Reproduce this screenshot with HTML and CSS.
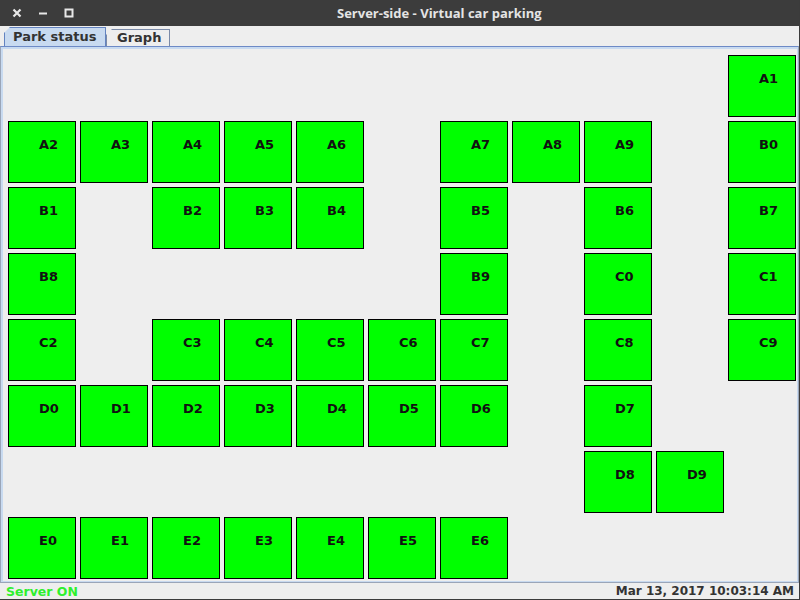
FILE: index.html
```html
<!DOCTYPE html>
<html>
<head>
<meta charset="utf-8">
<link rel="stylesheet" href="styles.css">
</head>
<body>
<div class="window">
  <div class="titlebar">
    <div class="controls">
      <svg class="ctl" width="10" height="10" viewBox="0 0 10 10"><path d="M1.5 1.5 L8.5 8.5 M8.5 1.5 L1.5 8.5" stroke="#e8e8e8" stroke-width="2.2" stroke-linecap="butt"/></svg>
      <svg class="ctl" width="10" height="10" viewBox="0 0 10 10"><path d="M1 5.5 H9" stroke="#e8e8e8" stroke-width="2"/></svg>
      <svg class="ctl" width="10" height="10" viewBox="0 0 10 10"><rect x="1.5" y="1.5" width="7" height="7" fill="none" stroke="#e8e8e8" stroke-width="2"/></svg>
    </div>
    <div class="title">Server-side - Virtual car parking</div>
  </div>
  <div class="tabs">
    <div class="tab selected">Park status</div>
    <div class="tab">Graph</div>
  </div>
  <div class="panel">
    <div class="grid">
      <div class="e"></div><div class="e"></div><div class="e"></div><div class="e"></div><div class="e"></div><div class="e"></div><div class="e"></div><div class="e"></div><div class="e"></div><div class="e"></div><div class="c">A1</div>
      <div class="c">A2</div><div class="c">A3</div><div class="c">A4</div><div class="c">A5</div><div class="c">A6</div><div class="e"></div><div class="c">A7</div><div class="c">A8</div><div class="c">A9</div><div class="e"></div><div class="c">B0</div>
      <div class="c">B1</div><div class="e"></div><div class="c">B2</div><div class="c">B3</div><div class="c">B4</div><div class="e"></div><div class="c">B5</div><div class="e"></div><div class="c">B6</div><div class="e"></div><div class="c">B7</div>
      <div class="c">B8</div><div class="e"></div><div class="e"></div><div class="e"></div><div class="e"></div><div class="e"></div><div class="c">B9</div><div class="e"></div><div class="c">C0</div><div class="e"></div><div class="c">C1</div>
      <div class="c">C2</div><div class="e"></div><div class="c">C3</div><div class="c">C4</div><div class="c">C5</div><div class="c">C6</div><div class="c">C7</div><div class="e"></div><div class="c">C8</div><div class="e"></div><div class="c">C9</div>
      <div class="c">D0</div><div class="c">D1</div><div class="c">D2</div><div class="c">D3</div><div class="c">D4</div><div class="c">D5</div><div class="c">D6</div><div class="e"></div><div class="c">D7</div><div class="e"></div><div class="e"></div>
      <div class="e"></div><div class="e"></div><div class="e"></div><div class="e"></div><div class="e"></div><div class="e"></div><div class="e"></div><div class="e"></div><div class="c">D8</div><div class="c">D9</div><div class="e"></div>
      <div class="c">E0</div><div class="c">E1</div><div class="c">E2</div><div class="c">E3</div><div class="c">E4</div><div class="c">E5</div><div class="c">E6</div><div class="e"></div><div class="e"></div><div class="e"></div><div class="e"></div>
    </div>
  </div>
  <div class="status">
    <span class="on">Server ON</span>
    <span class="date">Mar 13, 2017 10:03:14 AM</span>
  </div>
</div>
</body>
</html>
```

FILE: styles.css
```css
html, body {
  margin: 0;
  padding: 0;
}
body {
  width: 800px;
  height: 600px;
  overflow: hidden;
  background: #eeeeee;
  font-family: "DejaVu Sans", sans-serif;
}
.window {
  width: 800px;
  height: 600px;
  display: flex;
  flex-direction: column;
  box-sizing: border-box;
  border-bottom: 1px solid #3b3b3b;
  border-right: 1px solid #3b3b3b;
}
.titlebar {
  height: 26px;
  flex: none;
  background: #3c3c3c;
  display: flex;
  align-items: center;
  position: relative;
}
.controls {
  display: flex;
  align-items: center;
  gap: 16px;
  padding-left: 12px;
}
.ctl {
  display: block;
}
.title {
  position: absolute;
  left: 337px;
  top: 0;
  line-height: 26px;
  color: #e4e4e4;
  font-weight: bold;
  font-size: 13px;
  font-family: "Open Sans", "DejaVu Sans", sans-serif;
}
.tabs {
  height: 20px;
  flex: none;
  display: flex;
  align-items: flex-end;
  padding-left: 4px;
}
.tab {
  box-sizing: border-box;
  height: 17px;
  border: 1px solid #7a8aa8;
  border-bottom: none;
  font-size: 13px;
  font-weight: bold;
  color: #333333;
  line-height: 16px;
  white-space: nowrap;
  background: #eeeeee;
  clip-path: polygon(6px 0, 100% 0, 100% 100%, 0 100%, 0 6px);
}
.tab.selected {
  height: 19px;
  width: 102px;
  background: #c8daf0;
  border-color: #6383c0;
  line-height: 18px;
  padding-left: 8px;
}
.tab:not(.selected) {
  width: 64px;
  padding-left: 10px;
}
.panel {
  flex: none;
  height: 537px;
  box-sizing: border-box;
  border-top: 1px solid #6d8ac6;
  border-left: 1px solid #9aa5b8;
  border-right: 1px solid #9aa5b8;
  border-bottom: 1px solid #9aa5b8;
  box-shadow: inset 2px 2px 0 #c8daf0, inset -1px -1px 0 #c8daf0;
  padding: 8px 0 0 7px;
}
.grid {
  display: grid;
  grid-template-columns: repeat(11, 68px);
  grid-auto-rows: 62px;
  gap: 4px;
}
.c {
  box-sizing: border-box;
  background: #00ff00;
  border: 1px solid #000000;
  padding: 15px 0 0 30px;
  font-size: 13px;
  font-weight: bold;
  line-height: 15px;
  color: #111111;
}
.status {
  flex: 1;
  display: flex;
  justify-content: space-between;
  align-items: center;
  padding: 0 5px 0 6px;
  font-weight: bold;
}
.on {
  color: #2ef02e;
  font-size: 12.5px;
}
.date {
  color: #333333;
  font-size: 12px;
}
```
